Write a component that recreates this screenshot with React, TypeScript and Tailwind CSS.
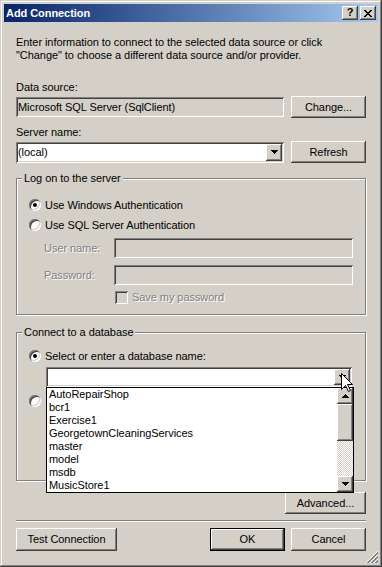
import React from "react";

const raised =
  "bg-[#d4d0c8] shadow-[inset_-1px_-1px_#404040,inset_1px_1px_#fff,inset_-2px_-2px_#808080,inset_2px_2px_#d4d0c8]";
const sunken =
  "shadow-[inset_1px_1px_#808080,inset_-1px_-1px_#fff,inset_2px_2px_#404040,inset_-2px_-2px_#d4d0c8]";
const disabledText = "text-[#808080] [text-shadow:1px_1px_0_#fff]";

const databases = [
  "AutoRepairShop",
  "bcr1",
  "Exercise1",
  "GeorgetownCleaningServices",
  "master",
  "model",
  "msdb",
  "MusicStore1",
];

function DownTri() {
  return (
    <svg width="7" height="4" viewBox="0 0 7 4" shapeRendering="crispEdges">
      <rect x="0" y="0" width="7" height="1" />
      <rect x="1" y="1" width="5" height="1" />
      <rect x="2" y="2" width="3" height="1" />
      <rect x="3" y="3" width="1" height="1" />
    </svg>
  );
}

function UpTri() {
  return (
    <svg width="7" height="4" viewBox="0 0 7 4" shapeRendering="crispEdges">
      <rect x="3" y="0" width="1" height="1" />
      <rect x="2" y="1" width="3" height="1" />
      <rect x="1" y="2" width="5" height="1" />
      <rect x="0" y="3" width="7" height="1" />
    </svg>
  );
}

function CloseGlyph() {
  return (
    <svg width="8" height="7" viewBox="0 0 8 7" shapeRendering="crispEdges">
      <rect x="0" y="0" width="2" height="1" />
      <rect x="6" y="0" width="2" height="1" />
      <rect x="1" y="1" width="2" height="1" />
      <rect x="5" y="1" width="2" height="1" />
      <rect x="2" y="2" width="4" height="1" />
      <rect x="3" y="3" width="2" height="1" />
      <rect x="2" y="4" width="4" height="1" />
      <rect x="1" y="5" width="2" height="1" />
      <rect x="5" y="5" width="2" height="1" />
      <rect x="0" y="6" width="2" height="1" />
      <rect x="6" y="6" width="2" height="1" />
    </svg>
  );
}

function Button({
  children,
  className = "",
  isDefault = false,
}: {
  children: React.ReactNode;
  className?: string;
  isDefault?: boolean;
}) {
  return (
    <button
      type="button"
      className={`flex items-center justify-center ${raised} ${isDefault ? "border border-black" : ""} ${className}`}
    >
      {children}
    </button>
  );
}

function Combo({ value, className = "" }: { value: string; className?: string }) {
  return (
    <div className={`flex items-center bg-white p-[2px] ${sunken} ${className}`}>
      <span className="flex-1 truncate">{value}</span>
      <span className={`flex h-full w-4 items-center justify-center ${raised}`}>
        <DownTri />
      </span>
    </div>
  );
}

function Radio({ checked = false }: { checked?: boolean }) {
  return (
    <span
      className={`flex h-3 w-3 shrink-0 items-center justify-center rounded-full bg-white ${sunken}`}
    >
      {checked && <span className="h-1 w-1 rounded-full bg-black" />}
    </span>
  );
}

function GroupBox({
  title,
  className = "",
  children,
}: {
  title: string;
  className?: string;
  children: React.ReactNode;
}) {
  return (
    <div
      className={`relative flex flex-col border border-[#808080] shadow-[inset_1px_1px_#fff,1px_1px_#fff] ${className}`}
    >
      <span className="absolute -top-[7px] left-[5px] bg-[#d4d0c8] px-[2px]">{title}</span>
      {children}
    </div>
  );
}

export default function App() {
  return (
    <div className="relative h-[567px] w-[382px] overflow-hidden bg-[#d4d0c8] p-1 font-['Liberation_Sans',Arial,sans-serif] text-[11px] leading-[13px] tracking-[-0.06px] text-black shadow-[inset_-1px_-1px_#404040,inset_1px_1px_#d4d0c8,inset_-2px_-2px_#808080,inset_2px_2px_#fff]">
      {/* title bar */}
      <div className="flex h-[18px] items-center bg-linear-to-r from-[#0a246a] to-[#a6caf0] pl-[2px] pr-[2px]">
        <span className="flex-1 font-bold text-white">Add Connection</span>
        <div className="flex gap-[2px]">
          <span className={`flex h-[14px] w-4 items-center justify-center pb-[1px] text-[11px] font-bold ${raised}`}>
            ?
          </span>
          <span className={`flex h-[14px] w-4 items-center justify-center ${raised}`}>
            <CloseGlyph />
          </span>
        </div>
      </div>

      <div className="relative flex flex-col px-3">
        <p className="mt-[14px]">
          Enter information to connect to the selected data source or click
          <br />
          "Change" to choose a different data source and/or provider.
        </p>

        <label className="mt-[19px]">Data source:</label>
        <div className="mt-[2px] flex h-[22px] items-center justify-between">
          <div className={`flex h-5 w-[268px] items-center pl-[2px] ${sunken}`}>
            Microsoft SQL Server (SqlClient)
          </div>
          <Button className="h-[22px] w-[75px]">Change...</Button>
        </div>

        <label className="mt-[8px]">Server name:</label>
        <div className="mt-[2px] flex h-[22px] items-center justify-between">
          <Combo value="(local)" className="h-[21px] w-[268px] pl-[2px]" />
          <Button className="h-[22px] w-[75px]">Refresh</Button>
        </div>

        <GroupBox title="Log on to the server" className="mt-[15px] pb-[9px]">
          <div className="mt-[18px] flex h-4 items-center gap-1 pl-3">
            <Radio checked />
            <span>Use Windows Authentication</span>
          </div>
          <div className="mt-1 flex h-4 items-center gap-1 pl-3">
            <Radio />
            <span>Use SQL Server Authentication</span>
          </div>
          <div className="mt-[5px] flex h-5 items-center pl-[27px]">
            <span className={`w-[70px] ${disabledText}`}>User name:</span>
            <div className={`h-5 w-[239px] ${sunken}`} />
          </div>
          <div className="mt-[7px] flex h-5 items-center pl-[27px]">
            <span className={`w-[70px] ${disabledText}`}>Password:</span>
            <div className={`h-5 w-[239px] ${sunken}`} />
          </div>
          <div className="mt-[5px] flex h-[15px] items-center gap-[4px] pl-[98px]">
            <span className={`h-[13px] w-[13px] ${sunken}`} />
            <span className={disabledText}>Save my password</span>
          </div>
        </GroupBox>

        <GroupBox title="Connect to a database" className="mt-[17px] pb-[71px]">
          <div className="mt-[15px] flex h-4 items-center gap-1 pl-3">
            <Radio checked />
            <span>Select or enter a database name:</span>
          </div>
          <div className="relative ml-[29px] mt-[3px] w-[306px]">
            <Combo value="" className="h-5 w-[306px]" />
            {/* open drop-down list */}
            <div className="absolute left-0 top-[20px] z-10 flex h-[106px] w-[308px] border border-black bg-white">
              <div className="flex-1 pl-[2px]">
                {databases.map((d) => (
                  <div key={d} className="h-[13px] leading-[13px]">
                    {d}
                  </div>
                ))}
              </div>
              <div className="flex w-4 flex-col">
                <div className={`flex h-4 items-center justify-center ${raised}`}>
                  <UpTri />
                </div>
                <div className={`h-[37px] ${raised}`} />
                <div className="flex-1 bg-[repeating-conic-gradient(#d4d0c8_0_25%,#fff_0_50%)] bg-[length:2px_2px]" />
                <div className={`flex h-4 items-center justify-center ${raised}`}>
                  <DownTri />
                </div>
              </div>
            </div>
          </div>
          <div className="mt-[6px] flex h-4 items-center pl-3">
            <Radio />
          </div>
        </GroupBox>

        <Button className="mt-[11px] h-[22px] w-[81px] self-end">Advanced...</Button>

        <div className="mt-[6px] h-[2px] border-t border-b border-t-[#808080] border-b-white" />

        <div className="mt-[6px] flex h-[23px] items-center justify-between">
          <Button className="h-[23px] w-[101px]">Test Connection</Button>
          <div className="flex gap-[6px]">
            <Button isDefault className="h-[23px] w-[75px]">
              OK
            </Button>
            <Button className="h-[23px] w-[75px]">Cancel</Button>
          </div>
        </div>
      </div>

      {/* size grip */}
      <svg
        className="absolute bottom-1 right-1"
        width="12"
        height="12"
        viewBox="0 0 12 12"
        shapeRendering="crispEdges"
      >
        {[0, 4, 8].map((o) => (
          <g key={o}>
            <line x1={12} y1={o} x2={o} y2={12} stroke="#fff" />
            <line x1={12} y1={o + 1} x2={o + 1} y2={12} stroke="#808080" />
            <line x1={12} y1={o + 2} x2={o + 2} y2={12} stroke="#808080" />
          </g>
        ))}
      </svg>

      {/* mouse pointer */}
      <svg className="absolute left-[341px] top-[373px] z-20" width="13" height="20" viewBox="0 0 13 20">
        <polygon
          points="0.5,0.5 0.5,16.5 4.5,12.5 7.5,18.5 9.5,17.5 6.5,11.5 11.5,11.5"
          fill="#fff"
          stroke="#000"
          strokeWidth="1"
        />
      </svg>
    </div>
  );
}
